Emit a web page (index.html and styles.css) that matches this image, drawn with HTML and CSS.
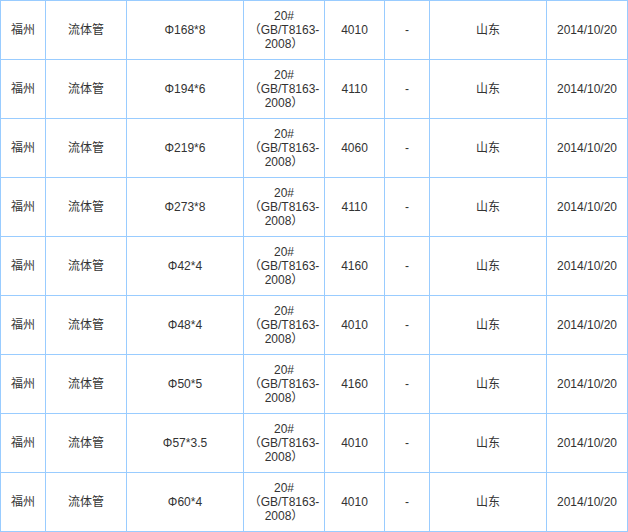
FILE: index.html
```html
<!DOCTYPE html>
<html lang="zh-CN">
<head>
<meta charset="utf-8">
<title>流体管价格</title>
<link rel="stylesheet" href="styles.css">
</head>
<body>
<table class="price-table">
  <colgroup>
    <col class="c1"><col class="c2"><col class="c3"><col class="c4"><col class="c5"><col class="c6"><col class="c7"><col class="c8">
  </colgroup>
  <tbody>
    <tr><td>福州</td><td>流体管</td><td>Φ168*8</td><td class="std">20#<br>（GB/T8163-<br>2008）</td><td>4010</td><td>-</td><td>山东</td><td>2014/10/20</td></tr>
    <tr><td>福州</td><td>流体管</td><td>Φ194*6</td><td class="std">20#<br>（GB/T8163-<br>2008）</td><td>4110</td><td>-</td><td>山东</td><td>2014/10/20</td></tr>
    <tr><td>福州</td><td>流体管</td><td>Φ219*6</td><td class="std">20#<br>（GB/T8163-<br>2008）</td><td>4060</td><td>-</td><td>山东</td><td>2014/10/20</td></tr>
    <tr><td>福州</td><td>流体管</td><td>Φ273*8</td><td class="std">20#<br>（GB/T8163-<br>2008）</td><td>4110</td><td>-</td><td>山东</td><td>2014/10/20</td></tr>
    <tr><td>福州</td><td>流体管</td><td>Φ42*4</td><td class="std">20#<br>（GB/T8163-<br>2008）</td><td>4160</td><td>-</td><td>山东</td><td>2014/10/20</td></tr>
    <tr><td>福州</td><td>流体管</td><td>Φ48*4</td><td class="std">20#<br>（GB/T8163-<br>2008）</td><td>4010</td><td>-</td><td>山东</td><td>2014/10/20</td></tr>
    <tr><td>福州</td><td>流体管</td><td>Φ50*5</td><td class="std">20#<br>（GB/T8163-<br>2008）</td><td>4160</td><td>-</td><td>山东</td><td>2014/10/20</td></tr>
    <tr><td>福州</td><td>流体管</td><td>Φ57*3.5</td><td class="std">20#<br>（GB/T8163-<br>2008）</td><td>4010</td><td>-</td><td>山东</td><td>2014/10/20</td></tr>
    <tr><td>福州</td><td>流体管</td><td>Φ60*4</td><td class="std">20#<br>（GB/T8163-<br>2008）</td><td>4010</td><td>-</td><td>山东</td><td>2014/10/20</td></tr>
  </tbody>
</table>
</body>
</html>
```

FILE: styles.css
```css
html, body {
  margin: 0;
  padding: 0;
  background: #ffffff;
}
body {
  font-family: "Liberation Sans", "Noto Sans CJK SC", sans-serif;
  font-size: 12px;
  color: #333333;
}
.price-table {
  border-collapse: collapse;
  table-layout: fixed;
  width: 627px;
}
.price-table col.c1 { width: 45px; }
.price-table col.c2 { width: 81px; }
.price-table col.c3 { width: 117px; }
.price-table col.c4 { width: 81px; }
.price-table col.c5 { width: 60px; }
.price-table col.c6 { width: 45px; }
.price-table col.c7 { width: 117px; }
.price-table col.c8 { width: 81px; }
.price-table td {
  border: 1px solid #99ccff;
  padding: 0;
  height: 58px;
  text-align: center;
  vertical-align: middle;
  line-height: 14px;
  white-space: nowrap;
  text-spacing-trim: space-all;
}
```
